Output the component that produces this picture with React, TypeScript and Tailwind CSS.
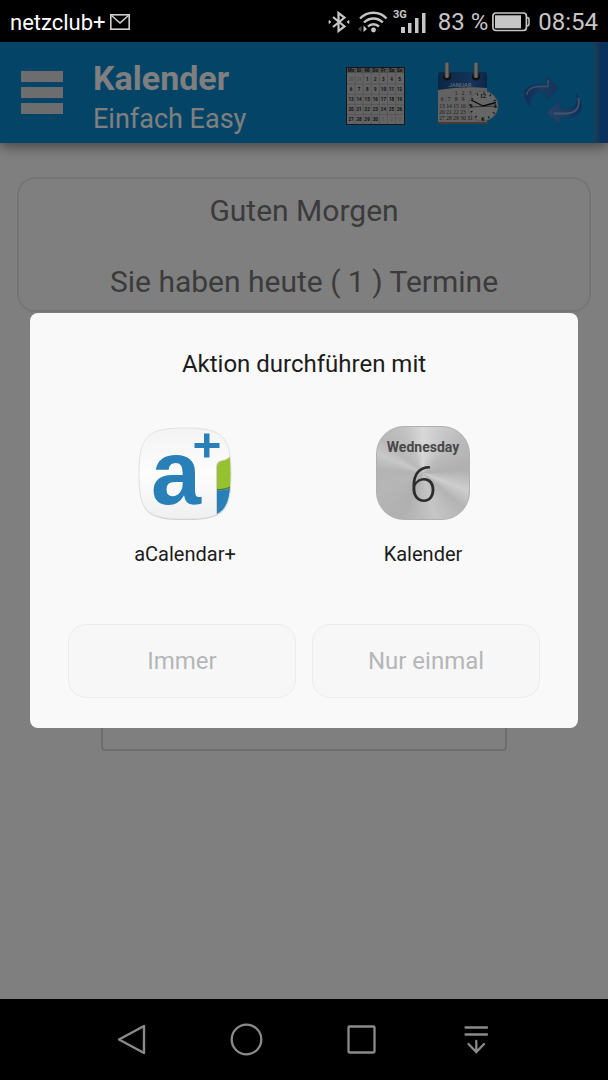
import type { ReactNode } from "react";

const monthRows = [
  ["30", "31", "1", "2", "3", "4", "5"],
  ["6", "7", "8", "9", "10", "11", "12"],
  ["13", "14", "15", "16", "17", "18", "19"],
  ["20", "21", "22", "23", "24", "25", "26"],
  ["27", "28", "29", "30", "1", "2", "3"],
];
const weekdays = ["Mo", "Di", "Mi", "Do", "Fr", "Sa", "So"];

const deskRows = [
  ["", "", "1", "2", "3"],
  ["6", "7", "8", "9", ""],
  ["13", "14", "15", "16", ""],
  ["20", "21", "22", "23", ""],
  ["27", "28", "29", "30", "31"],
];

const MailIcon = () => (
  <svg width="20" height="16" viewBox="0 0 20 16" fill="none" stroke="#d0d0d0" strokeWidth="1.6" aria-hidden="true">
    <rect x="0.8" y="0.8" width="18.4" height="14.4" />
    <path d="M1.5 1.5 10 9l8.500-7.500" />
  </svg>
);

const BluetoothIcon = () => (
  <svg width="22" height="22" viewBox="0 0 22 22" fill="none" stroke="#c6c6c6" strokeWidth="2.200" aria-hidden="true">
    <path d="M5 6 16.500 15.500 10.500 20V2L16.500 6.500 5 16" />
    <path d="M1 9.500v3L3 11zM21 9.500v3L19 11z" fill="#c6c6c6" strokeWidth="0.800" />
  </svg>
);

const WifiIcon = () => (
  <svg width="30" height="22" viewBox="0 0 30 22" fill="none" aria-hidden="true">
    <path d="M2 7.500C9.500-.2 21.500-.2 28.500 7.500M6 11.500c5.500-5.300 13.500-5.300 18.800 0M10 15.500c3-3 7.800-3 11 0" stroke="#c6c6c6" strokeWidth="2.400" />
    <circle cx="15.500" cy="19" r="2.400" fill="#c6c6c6" />
    <path d="M3.500 15v6L0 18z" fill="#4b4b4b" />
    <path d="M5.500 14.500v6.500L9 18z" fill="#c6c6c6" />
  </svg>
);

const SignalIcon = () => (
  <svg width="34" height="28" viewBox="0 0 34 28" fill="#c6c6c6" aria-hidden="true">
    <text x="1" y="10" fontSize="11" fontWeight="700" fontFamily="Roboto, sans-serif">3G</text>
    <rect x="9" y="19" width="4" height="6" />
    <rect x="16" y="15" width="3.500" height="10" />
    <rect x="23" y="10" width="3.500" height="15" />
    <rect x="30" y="5" width="3.500" height="20" />
  </svg>
);

const BatteryIcon = () => (
  <svg width="38" height="20" viewBox="0 0 38 20" fill="none" aria-hidden="true">
    <rect x="0.900" y="1" width="33.500" height="17.500" rx="3" stroke="#c6c6c6" strokeWidth="1.700" />
    <rect x="3" y="3.300" width="26" height="13" fill="#c6c6c6" />
    <path d="M35 5.500c2 0 2 1 2 2.500v3.500c0 1.500 0 2.500-2 2.500" stroke="#c6c6c6" strokeWidth="1.500" />
  </svg>
);

const MonthIcon = () => (
  <svg width="60" height="66" viewBox="0 0 60 66" fontFamily="Roboto, sans-serif" aria-hidden="true">
    <rect x="0.500" y="7.500" width="58" height="57" fill="#c8c8c8" stroke="#303030" />
    <rect x="1" y="8" width="57" height="5" fill="#a0a0a0" />
    <path d="M9 13v51M17.200 13v51M25.300 13v51M33.400 13v51M41.500 13v51M49.600 13v51M1 24h57M1 34.200h57M1 44.400h57M1 54.600h57" stroke="#a4a4a4" strokeWidth="0.700" />
    {weekdays.map((day, i) => (
      <text key={day} x={5 + i * 8.1} y="12.300" fontSize="4.500" fontWeight="700" textAnchor="middle" fill="#222">
        {day}
      </text>
    ))}
    {monthRows.map((row, r) =>
      row.map((day, c) => {
        const outside = (r === 0 && c < 2) || (r === 4 && c > 3);
        return (
          <text
            key={`${r}-${c}`}
            x={5 + c * 8.1}
            y={20.5 + r * 10.2}
            fontSize="4.500"
            fontWeight="700"
            textAnchor="middle"
            fill={outside ? "#a4a4a4" : "#222222"}
          >
            {day}
          </text>
        );
      })
    )}
  </svg>
);

const DeskCalendarIcon = () => (
  <svg width="70" height="66" viewBox="0 0 70 66" aria-hidden="true">
    <defs>
      <linearGradient id="ring" x1="0" x2="1">
        <stop offset="0" stopColor="#777" />
        <stop offset="0.500" stopColor="#eee" />
        <stop offset="1" stopColor="#666" />
      </linearGradient>
      <linearGradient id="band" x1="0" x2="1">
        <stop offset="0" stopColor="#1a4c8c" />
        <stop offset="0.700" stopColor="#2868b4" />
        <stop offset="1" stopColor="#1a4c8c" />
      </linearGradient>
    </defs>
    <rect x="8" y="27" width="49" height="36" fill="#c4c4c4" />
    <rect x="8" y="62" width="50" height="2" fill="#887868" />
    <path d="M8 30V14q0-2 2-2h45q2 0 2 2v14q-25-2-49 2z" fill="url(#band)" />
    <circle cx="17" cy="16.500" r="4" fill="#222" />
    <circle cx="46" cy="16.500" r="4" fill="#222" />
    <rect x="14.500" y="2.500" width="5" height="15.500" rx="2.500" fill="url(#ring)" />
    <rect x="43.500" y="2.500" width="5" height="15.500" rx="2.500" fill="url(#ring)" />
    <text x="30" y="26.500" fontSize="6" textAnchor="middle" fontFamily="Roboto, sans-serif" fill="#e0e0e0">JANUAR</text>
    <g fontFamily="Liberation Serif, serif" fontSize="5.500" textAnchor="middle" fill="#333">
      {deskRows.map((row, r) =>
        row.map((day, c) => (
          <text key={`${r}-${c}`} x={12 + c * 7} y={35 + r * 6.300}>
            {day}
          </text>
        ))
      )}
    </g>
    <circle cx="53" cy="46" r="15" fill="#cccccc" stroke="#a5a5a5" strokeWidth="0.800" />
    <circle cx="53" cy="46" r="12.800" fill="none" stroke="#222" strokeWidth="2" strokeDasharray="1.200 5.500" />
    <g fontFamily="Liberation Serif, serif" fontSize="6" fontWeight="700" textAnchor="middle" fill="#111">
      <text x="53" y="37.500">12</text>
      <text x="65" y="48">3</text>
      <text x="53" y="61">6</text>
      <text x="41" y="48">9</text>
    </g>
    <path d="M53 46 66 42.500M53 46 41 40" stroke="#111" strokeWidth="1.300" />
    <path d="M66 46 40 47" stroke="#333" strokeWidth="0.700" />
  </svg>
);

const SyncIcon = () => (
  <svg width="58" height="66" viewBox="0 0 58 66" aria-hidden="true">
    <defs>
      <linearGradient id="arrowA" x1="0" y1="0" x2="1" y2="0">
        <stop offset="0" stopColor="#1d5cae" />
        <stop offset="0.500" stopColor="#3474c4" />
        <stop offset="1" stopColor="#2a68ba" />
      </linearGradient>
      <linearGradient id="arrowB" x1="0" y1="0" x2="1" y2="0">
        <stop offset="0" stopColor="#4c88cc" />
        <stop offset="0.600" stopColor="#3474c4" />
        <stop offset="1" stopColor="#1d5cae" />
      </linearGradient>
    </defs>
    <path d="M6 47C1 40-1 34 1 30c3-5 10-6 21.500-6v-8L35 28.500 22.500 40v-8C14 31.500 9 33 7.500 38.500 6.500 41 6 44 6 47z" fill="url(#arrowA)" stroke="#2f6cb4" strokeWidth="0.600" />
    <path d="M2.500 35C4 28 9 26.500 15 26.500h9V20" fill="none" stroke="#98b8dc" strokeWidth="1.500" opacity="0.700" />
    <path d="M52 33c5 6 7 12 5 17-3 6.500-10 8-21 8v7L22.500 52.500 36 41v8c8 .500 14-.500 16-6 1-3 .500-7 0-10z" fill="url(#arrowB)" stroke="#2f6cb4" strokeWidth="0.600" />
    <path d="M54.500 38c2 10-3 14.500-11 15.500H30" fill="none" stroke="#a8c4e0" strokeWidth="1.800" opacity="0.700" />
  </svg>
);

const ACalendarIcon = () => (
  <svg width="94" height="94" viewBox="0 -1 94 94" className="overflow-visible" aria-hidden="true">
    <defs>
      <clipPath id="acal">
        <path d="M47 1C85 1 93 9 93 47S85 92 47 92 1 85 1 47 9 1 47 1z" />
      </clipPath>
      <linearGradient id="tile" x1="0" y1="0" x2="0" y2="1">
        <stop offset="0" stopColor="#f3f3f4" />
        <stop offset="0.500" stopColor="#fdfdfd" />
        <stop offset="1" stopColor="#efefef" />
      </linearGradient>
    </defs>
    <path d="M47 2C85 2 93 10 93 48S85 93 47 93 1 86 1 48 9 2 47 2z" fill="#c9c9c9" />
    <g clipPath="url(#acal)">
      <rect width="94" height="94" fill="url(#tile)" />
      <path d="M78 94V40q0-6 6-7 6-1 10-6v67z" fill="#d2d2d2" />
      <path d="M79 62V40q0-5 5-6 6-1 10-6v34z" fill="#96c22f" />
      <path d="M79 94V63q7 1 15-2v33z" fill="#2980b9" />
      <path d="M79 62.500q7 1 15-3" fill="none" stroke="#4b7d45" strokeWidth="1.200" />
    </g>
    <path d="M47 1C85 1 93 9 93 47S85 92 47 92 1 85 1 47 9 1 47 1z" fill="none" stroke="#e2e2e2" strokeWidth="1" />
    <text x="13" y="77" fontSize="90" fontWeight="700" fontFamily="Liberation Sans, sans-serif" fill="#2980b9">a</text>
    <path d="M66 6.500h5.500V16h10v5h-10v9.500H66V21h-9.500v-5H66z" fill="#2980b9" />
  </svg>
);

const KalenderIcon = () => (
  <span className="flex h-[94px] w-[94px] flex-col items-center rounded-[28px] border border-[#b0b0b0] bg-[conic-gradient(from_0deg_at_50%_50%,#d8d8d8,#bababa_50deg,#b0b0b0_85deg,#cecece_112deg,#b4b4b4_130deg,#c6c6c6_165deg,#b0b0b0_205deg,#b6b6b6_250deg,#b4b4b4_275deg,#c8c8c8_293deg,#b8b8b8_310deg,#c0c0c0_335deg,#d8d8d8)] pt-[10px]">
    <span className="text-sm leading-5 font-bold text-[#484848]">Wednesday</span>
    <span className="text-[50px] leading-[56px] font-light text-[#2c2c2c]">6</span>
  </span>
);

const StatusBar = () => (
  <div className="flex h-[42px] items-center bg-black px-[10px] pt-[2px] text-[24px] text-[#c6c6c6]">
    <span className="text-[22px] text-white">netzclub+</span>
    <span className="ml-1">
      <MailIcon />
    </span>
    <div className="ml-auto flex items-center">
      <BluetoothIcon />
      <span className="ml-2">
        <WifiIcon />
      </span>
      <span className="mr-3 ml-1">
        <SignalIcon />
      </span>
      <span>83 %</span>
      <span className="mr-2 ml-1">
        <BatteryIcon />
      </span>
      <span>08:54</span>
    </div>
  </div>
);

const Header = () => (
  <header className="relative flex h-[101px] items-center bg-[#0888ce] pl-[21px] shadow-[0_4px_12px_rgba(0,0,0,0.45)]">
    <button type="button" aria-label="Menü" className="flex flex-col gap-[5px]">
      <span className="h-[11px] w-[42px] bg-[#dadada]" />
      <span className="h-[11px] w-[42px] bg-[#dadada]" />
      <span className="h-[11px] w-[42px] bg-[#dadada]" />
    </button>
    <div className="ml-[30px] pt-[10px] text-white">
      <h1 className="text-[34px] leading-[42px] font-bold">Kalender</h1>
      <p className="text-[27px] leading-[40px]">Einfach Easy</p>
    </div>
    <div className="mr-3 ml-auto flex gap-6">
      <button type="button" aria-label="Monatsansicht">
        <MonthIcon />
      </button>
      <button type="button" aria-label="Termine">
        <DeskCalendarIcon />
      </button>
      <button type="button" aria-label="Aktualisieren">
        <SyncIcon />
      </button>
    </div>
    <div className="w-[14px] self-stretch bg-linear-to-r from-[#3a80a8] to-[#1464b8] to-50%" />
  </header>
);

const AppChoice = ({ label, children }: { label: string; children: ReactNode }) => (
  <button type="button" className="flex flex-col items-center gap-5">
    {children}
    <span className="text-[20px] leading-7 text-[#1c1c1c]">{label}</span>
  </button>
);

const ChooserDialog = () => (
  <div
    role="dialog"
    aria-labelledby="chooser-title"
    className="w-full rounded-lg bg-[#f9f9f9] px-9 pt-[35px] pb-[30px]"
  >
    <h2 id="chooser-title" className="text-center text-[24px] leading-8 text-[#1c1c1c]">
      Aktion durchführen mit
    </h2>
    <div className="mt-[46px] grid grid-cols-2">
      <AppChoice label="aCalendar+">
        <ACalendarIcon />
      </AppChoice>
      <AppChoice label="Kalender">
        <KalenderIcon />
      </AppChoice>
    </div>
    <div className="mt-14 grid grid-cols-2 gap-4 px-[2px] text-[24px] text-[#b4b6b8]">
      <button type="button" disabled className="h-[74px] rounded-[18px] border border-[#ececec] bg-[#f7f7f7]">
        Immer
      </button>
      <button type="button" disabled className="h-[74px] rounded-[18px] border border-[#ececec] bg-[#f7f7f7]">
        Nur einmal
      </button>
    </div>
  </div>
);

const NavBar = () => (
  <nav className="grid h-[81px] grid-cols-4 place-items-center bg-black px-[74px]">
    <button type="button" aria-label="Zurück">
      <svg width="34" height="34" viewBox="0 0 34 34" fill="none" stroke="#8a8a8a" strokeWidth="2.400" strokeLinejoin="round">
        <path d="M29 3v27L4 16.500z" />
      </svg>
    </button>
    <button type="button" aria-label="Startseite">
      <svg width="34" height="34" viewBox="0 0 34 34" fill="none" stroke="#8a8a8a" strokeWidth="2.300">
        <circle cx="16.500" cy="16.500" r="14.800" />
      </svg>
    </button>
    <button type="button" aria-label="Letzte Apps">
      <svg width="34" height="34" viewBox="0 0 34 34" fill="none" stroke="#8a8a8a" strokeWidth="2.300">
        <rect x="3.500" y="3.500" width="26" height="26" rx="1" />
      </svg>
    </button>
    <button type="button" aria-label="Benachrichtigungen">
      <svg width="34" height="34" viewBox="0 0 34 34" fill="none" stroke="#8a8a8a" strokeWidth="2.300" strokeLinecap="round">
        <path d="M5.500 4.500h21.500M5.500 11.500h21.500M16.300 18v11M8.500 21l7.800 8 7.800-8" />
      </svg>
    </button>
  </nav>
);

const App = () => {
  return (
    <div className="flex min-h-screen flex-col font-[Roboto,sans-serif]">
      <StatusBar />
      <div className="relative flex flex-1 flex-col bg-white">
        <Header />
        <main className="flex-1 text-[#767676]">
          <section className="mx-[17px] mt-[34px] rounded-[18px] border-2 border-[#ebebeb] pt-[14px] pb-[10px] text-center text-[30px] leading-[36px]">
            <p>Guten Morgen</p>
            <p className="mt-[35px]">Sie haben heute ( 1 ) Termine</p>
          </section>
          <section className="mx-[101px] mt-10 h-[399px] rounded border-2 border-[#dcdcdc]" />
        </main>
        <div className="absolute inset-0 flex items-center bg-black/50 px-[30px]">
          <ChooserDialog />
        </div>
      </div>
      <NavBar />
    </div>
  );
};

export default App;
